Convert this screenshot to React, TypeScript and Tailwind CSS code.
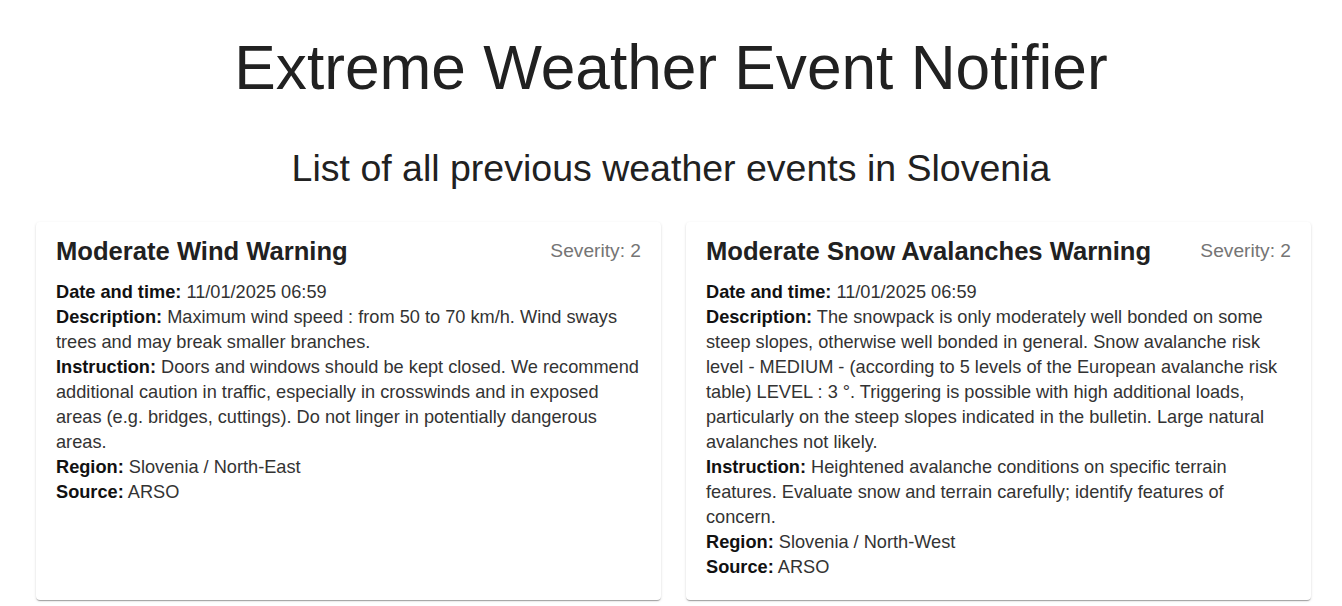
import React from "react";

interface WeatherEvent {
  title: string;
  severity: number;
  date: string;
  description: string;
  instruction: string;
  region: string;
  source: string;
}

const events: WeatherEvent[] = [
  {
    title: "Moderate Wind Warning",
    severity: 2,
    date: "11/01/2025 06:59",
    description:
      "Maximum wind speed : from 50 to 70 km/h. Wind sways trees and may break smaller branches.",
    instruction:
      "Doors and windows should be kept closed. We recommend additional caution in traffic, especially in crosswinds and in exposed areas (e.g. bridges, cuttings). Do not linger in potentially dangerous areas.",
    region: "Slovenia / North-East",
    source: "ARSO",
  },
  {
    title: "Moderate Snow Avalanches Warning",
    severity: 2,
    date: "11/01/2025 06:59",
    description:
      "The snowpack is only moderately well bonded on some steep slopes, otherwise well bonded in general. Snow avalanche risk level - MEDIUM - (according to 5 levels of the European avalanche risk table) LEVEL : 3 °. Triggering is possible with high additional loads, particularly on the steep slopes indicated in the bulletin. Large natural avalanches not likely.",
    instruction:
      "Heightened avalanche conditions on specific terrain features. Evaluate snow and terrain carefully; identify features of concern.",
    region: "Slovenia / North-West",
    source: "ARSO",
  },
];

function Field({ label, value }: { label: string; value: string }) {
  return (
    <p>
      <span className="font-bold text-[#111]">{label}:</span> {value}
    </p>
  );
}

function EventCard({ event }: { event: WeatherEvent }) {
  return (
    <div className="bg-white rounded-[4px] shadow-[0_2px_1px_-1px_rgba(0,0,0,0.2),0_1px_1px_0_rgba(0,0,0,0.14),0_1px_3px_0_rgba(0,0,0,0.12)] px-5 pt-[14px] pb-5">
      {/* header: title + severity */}
      <div className="flex items-start justify-between gap-4">
        <h2 className="text-[25.6px] leading-[30px] font-bold text-[#212121]">{event.title}</h2>
        <span className="text-[19.2px] leading-[30px] text-[#757575] whitespace-nowrap">
          Severity: {event.severity}
        </span>
      </div>
      <div className="mt-[14px] text-[18.2px] leading-[25px] text-[#333]">
        <Field label="Date and time" value={event.date} />
        <Field label="Description" value={event.description} />
        <Field label="Instruction" value={event.instruction} />
        <Field label="Region" value={event.region} />
        <Field label="Source" value={event.source} />
      </div>
    </div>
  );
}

export default function App() {
  return (
    <div className="min-h-screen bg-white [font-family:'Liberation_Sans',Arial,sans-serif] text-[#212121]">
      <h1 className="text-center text-[62.2px] leading-[72px] font-normal pt-[32px]">
        Extreme Weather Event Notifier
      </h1>
      <h2 className="text-center text-[37.5px] leading-[44px] font-normal mt-[42px]">
        List of all previous weather events in Slovenia
      </h2>
      <div className="grid grid-cols-2 gap-[25px] pl-[36px] pr-[31px] mt-[32px]">
        {events.map((e) => (
          <EventCard key={e.title} event={e} />
        ))}
      </div>
    </div>
  );
}
